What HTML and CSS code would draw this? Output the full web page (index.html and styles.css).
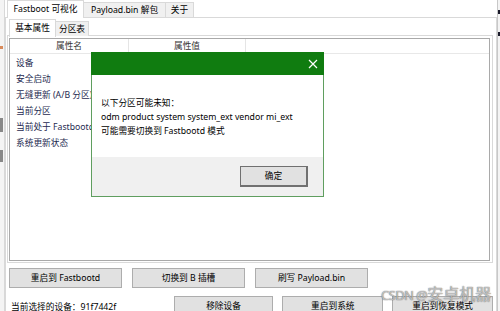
FILE: index.html
```html
<!DOCTYPE html>
<html>
<head>
<meta charset="utf-8">
<link rel="stylesheet" href="styles.css">
</head>
<body>
<div class="screen">
  <div class="edge-left"><span class="mark m1"></span><span class="mark m2"></span><span class="mark m3"></span></div>
  <div class="window">
    <div class="tabs outer">
      <div class="tab sel t1">Fastboot 可视化</div>
      <div class="tab t2">Payload.bin 解包</div>
      <div class="tab t3">关于</div>
    </div>
    <div class="outer-page">
      <div class="tabs inner">
        <div class="tab sel i1">基本属性</div>
        <div class="tab i2">分区表</div>
      </div>
      <div class="inner-page">
        <div class="listview">
          <div class="lv-head">
            <div class="col c1">属性名</div>
            <div class="col c2">属性值</div>
            <div class="col c3"></div>
          </div>
          <div class="lv-body">
            <div class="row">设备</div>
            <div class="row">安全启动</div>
            <div class="row">无缝更新 (A/B 分区)</div>
            <div class="row">当前分区</div>
            <div class="row">当前处于 Fastbootd</div>
            <div class="row">系统更新状态</div>
          </div>
        </div>
      </div>
      <div class="btn-row r1">
        <button class="btn w113">重启到 Fastbootd</button>
        <button class="btn w113">切换到 B 插槽</button>
        <button class="btn w113">刷写 Payload.bin</button>
      </div>
      <div class="btn-row r2">
        <div class="status">当前选择的设备：91f7442f</div>
        <button class="btn w100">移除设备</button>
        <button class="btn w101">重启到系统</button>
        <button class="btn w101">重启到恢复模式</button>
      </div>
    </div>
  </div>
  <div class="edge-right"><span class="rmark a"></span><span class="rmark b"></span></div>
</div>

<div class="dialog">
  <div class="dlg-title">
    <svg class="close" width="10" height="10" viewBox="0 0 10 10"><path d="M1 1L9 9M9 1L1 9" stroke="#fff" stroke-width="1.2" fill="none"/></svg>
  </div>
  <div class="dlg-body">
    <div>以下分区可能未知：</div>
    <div>odm product system system_ext vendor mi_ext</div>
    <div>可能需要切换到 Fastbootd 模式</div>
  </div>
  <div class="dlg-foot">
    <button class="btn ok">确定</button>
  </div>
</div>

<div class="watermark"><span class="wm-lat">CSDN @</span><span class="wm-cjk">安卓机器</span></div>
</body>
</html>
```
FILE: styles.css
```css
* { box-sizing: border-box; }
html, body {
  margin: 0;
  padding: 0;
  width: 500px;
  height: 311px;
  overflow: hidden;
  background: #fff;
  font-family: "Noto Sans", "Noto Sans CJK SC", sans-serif;
  font-size: 8.7px;
  color: #000;
}
body { position: relative; }

.screen {
  display: flex;
  width: 500px;
  height: 311px;
}
.edge-left {
  width: 5px;
  position: relative;
  background: #f4f4f4;
  border-right: 1px solid #d8d8d8;
}
.mark { position: absolute; left: 0; width: 3px; background: #888; }
.mark.m1 { top: 46px; height: 3px; background: #d88a5a; }
.mark.m2 { top: 118px; height: 14px; }
.mark.m3 { top: 150px; height: 12px; }
.edge-right {
  width: 3px;
  position: relative;
  border-left: 1px solid #c8c8c8;
  background: #f4f4f4;
}
.rmark { position: absolute; left: 0; width: 3px; height: 4px; background: #1a1a2a; }
.rmark.a { top: 10px; }
.rmark.b { top: 32px; }

.window {
  flex: 1;
  display: flex;
  flex-direction: column;
  min-width: 0;
}

.tabs {
  display: flex;
  align-items: flex-end;
  position: relative;
  z-index: 1;
}
.tabs.outer { height: 17px; padding-left: 2px; }
.tabs.inner { height: 18px; padding-left: 2px; margin-bottom: -1px; }
.tab {
  height: 15px;
  line-height: 14px;
  text-align: center;
  border: 1px solid #d9d9d9;
  border-bottom: none;
  background: #f0f0f0;
  color: #000;
  white-space: nowrap;
  margin-right: -1px;
}
.tab.sel {
  background: #fff;
  height: 18px;
  line-height: 16px;
  margin-bottom: -1px;
  position: relative;
  z-index: 2;
}
.t1 { width: 77px; }
.t2 { width: 83px; }
.t3 { width: 29px; }
.i1 { width: 47px; }
.i2 { width: 34px; }

.outer-page {
  flex: 1;
  border: 1px solid #d9d9d9;
  border-bottom: none;
  padding: 0 3px 0 1px;
  display: flex;
  flex-direction: column;
}

.inner-page {
  height: 228px;
  border: 1px solid #d9d9d9;
  padding: 2px 1px 1px 1px;
  display: flex;
}
.listview {
  flex: 1;
  border: 1px solid #a9a9a9;
  display: flex;
  flex-direction: column;
  margin-right: 1px;
}
.lv-head {
  height: 15px;
  display: flex;
  border-bottom: 1px solid #e8e8e8;
}
.col {
  text-align: center;
  line-height: 15px;
  color: #333;
  border-right: 1px solid #e5e5e5;
}
.col.c1 { width: 119px; }
.col.c2 { width: 117px; }
.col.c3 { flex: 1; border-right: none; }
.lv-body { padding-top: 1px; }
.row {
  height: 16px;
  line-height: 16px;
  padding-left: 6px;
  color: #1e2a50;
  white-space: nowrap;
  overflow: hidden;
  width: 119px;
}

.btn-row {
  display: flex;
  align-items: center;
}
.btn-row.r1 { margin-top: 5px; padding-left: 2px; gap: 10px; }
.btn-row.r2 { margin-top: 8px; padding-left: 4px; gap: 9px; }
.btn {
  height: 20px;
  padding: 0;
  border: 1px solid #adadad;
  background: #e1e1e1;
  font-family: "Noto Sans", "Noto Sans CJK SC", sans-serif;
  font-size: 8.7px;
  color: #000;
  line-height: 18px;
  white-space: nowrap;
}
.w113 { width: 113px; }
.w100 { width: 100px; }
.w101 { width: 101px; }
.status {
  width: 152px;
  color: #000;
  white-space: nowrap;
  margin-right: 2px;
}

.dialog {
  position: absolute;
  left: 91px;
  top: 52px;
  width: 233px;
  height: 145px;
  border: 1px solid #5f9e5f;
  background: #fff;
  display: flex;
  flex-direction: column;
  z-index: 5;
}
.dlg-title {
  height: 23px;
  background: #107c10;
  display: flex;
  justify-content: flex-end;
  align-items: center;
  padding-right: 6px;
  margin: -1px -1px 0 -1px;
}
.close { display: block; }
.dlg-body {
  height: 82px;
  padding: 21px 0 0 9px;
  line-height: 14px;
  color: #000;
  white-space: nowrap;
}
.dlg-foot {
  flex: 1;
  background: #f0f0f0;
  display: flex;
  justify-content: flex-end;
  align-items: flex-start;
  padding: 9px 15px 0 0;
}
.btn.ok {
  width: 68px;
  height: 21px;
  border: 1px solid #707070;
  border-right-width: 2px;
  border-bottom-width: 2px;
}

.watermark {
  position: absolute;
  left: 381px;
  top: 284px;
  font-family: "Noto Sans", "Noto Sans CJK SC", sans-serif;
  color: rgba(255,255,255,0.55);
  text-shadow: 0 0 1px rgba(90,90,90,0.75), 0 0 1px rgba(90,90,90,0.75);
  white-space: nowrap;
  z-index: 6;
  line-height: 20px;
}
.wm-lat { font-size: 13px; letter-spacing: -0.6px; }
.wm-cjk { font-size: 16px; }
```
